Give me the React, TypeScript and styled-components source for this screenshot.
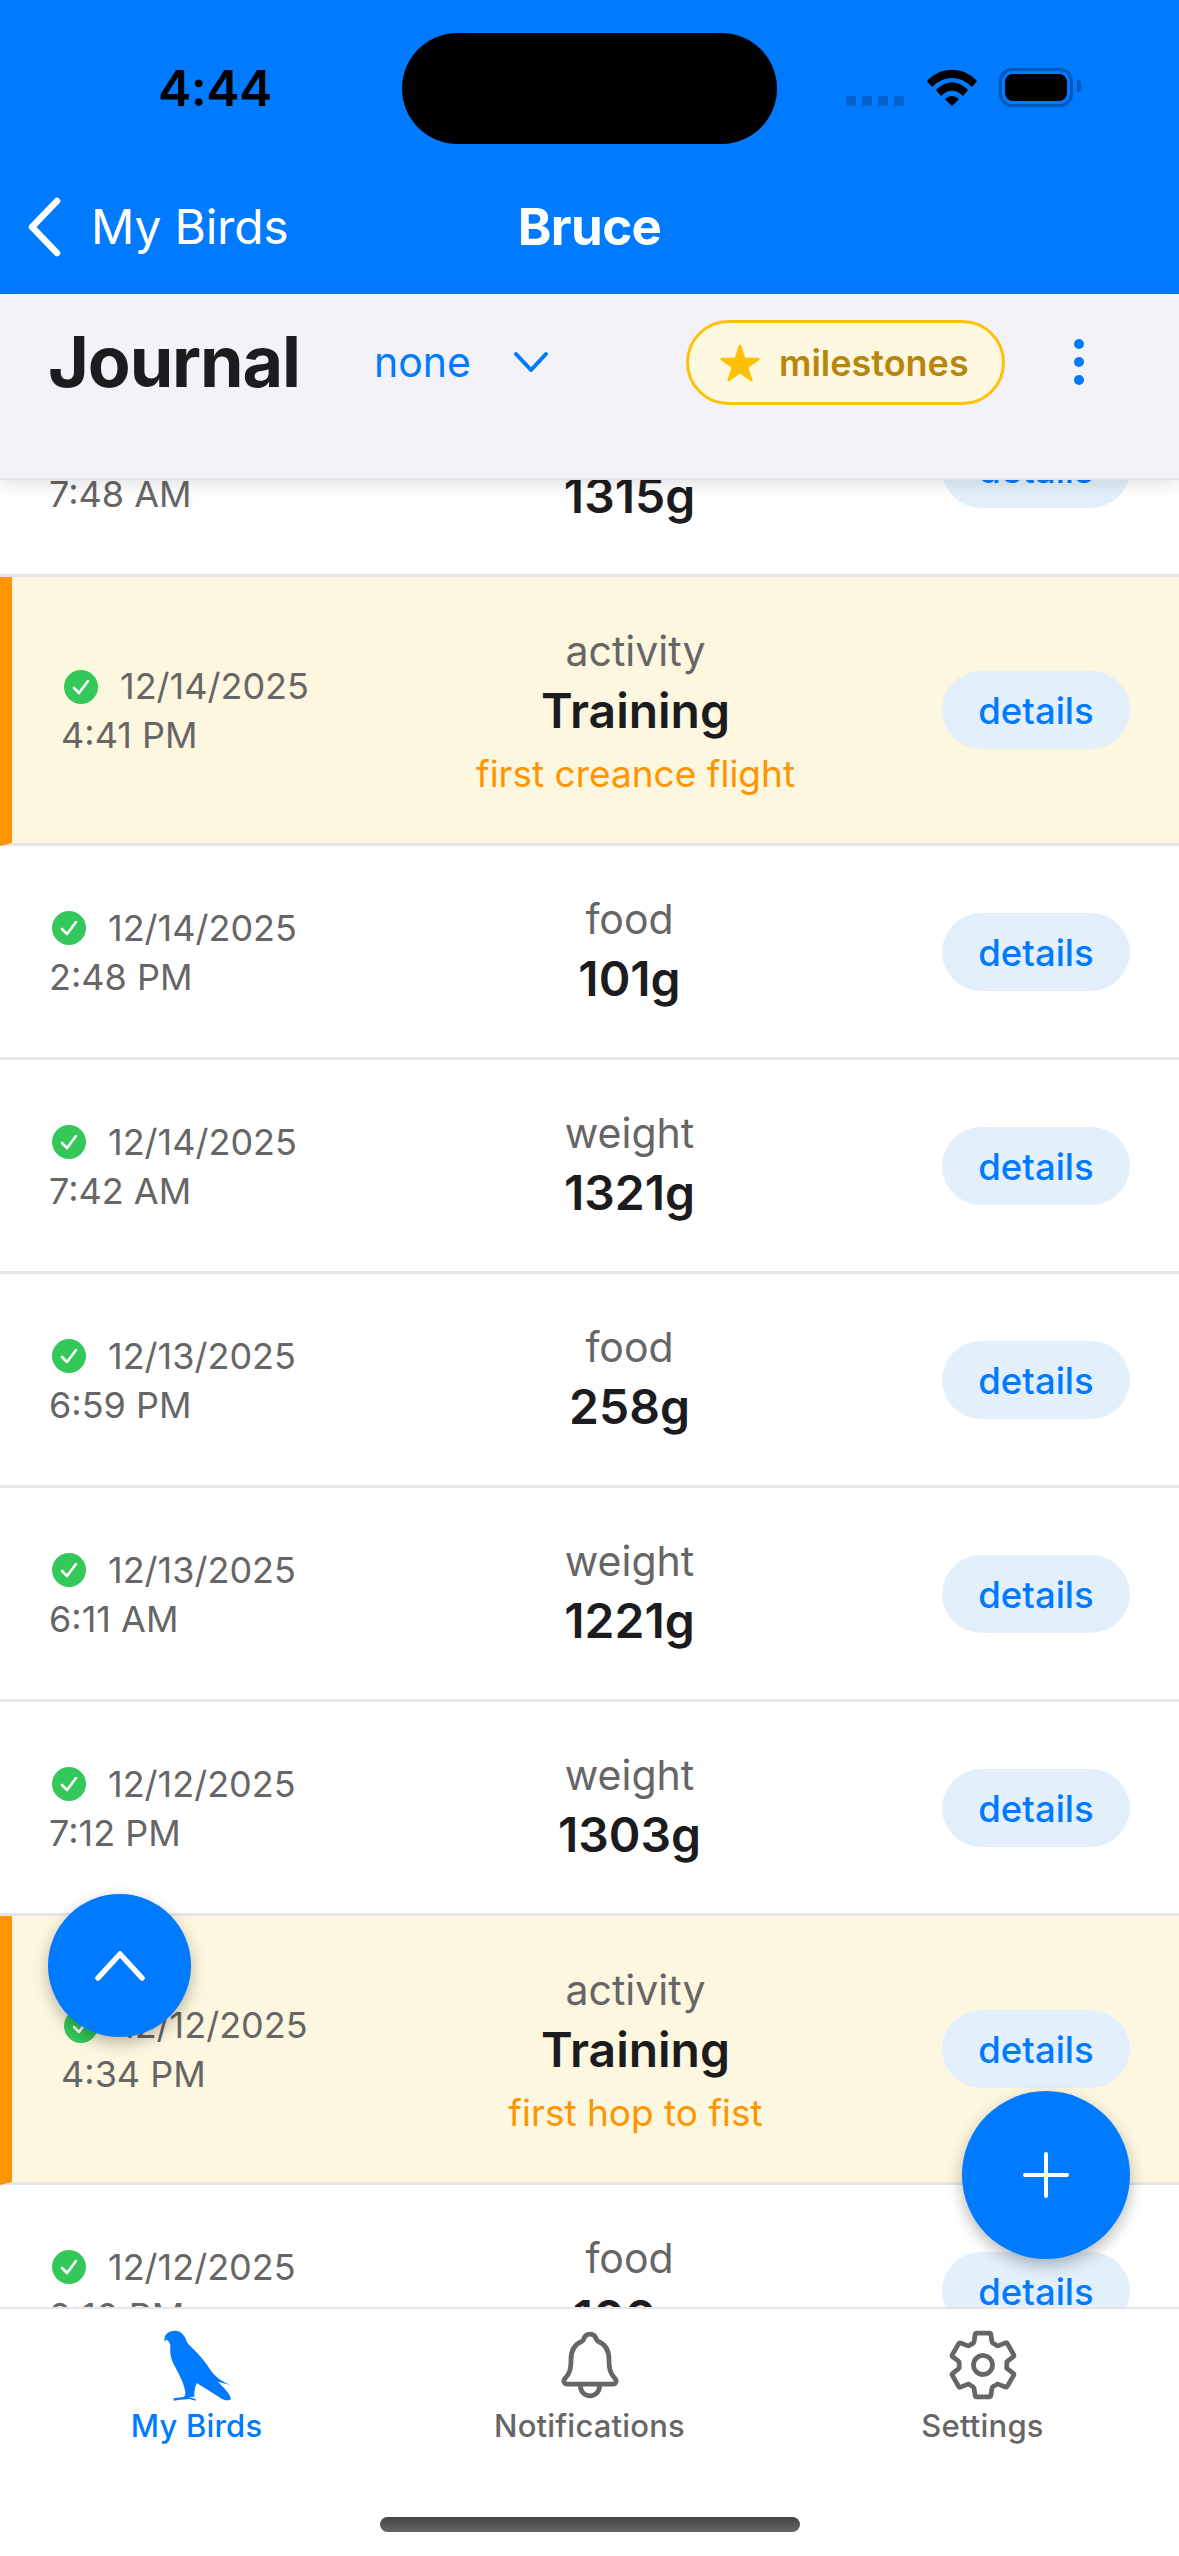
import styled, { createGlobalStyle } from 'styled-components';
import { IoNotificationsOutline, IoSettingsOutline, IoStar } from 'react-icons/io5';

const BLUE = '#007aff';
const FONT = 'Inter, "Noto Sans", "Liberation Sans", sans-serif';

type Entry = {
  date: string;
  time: string;
  kind: string;
  value: string;
  note?: string;
};

const entries: Entry[] = [
  { date: '12/15/2025', time: '7:48 AM', kind: 'weight', value: '1315g' },
  { date: '12/14/2025', time: '4:41 PM', kind: 'activity', value: 'Training', note: 'first creance flight' },
  { date: '12/14/2025', time: '2:48 PM', kind: 'food', value: '101g' },
  { date: '12/14/2025', time: '7:42 AM', kind: 'weight', value: '1321g' },
  { date: '12/13/2025', time: '6:59 PM', kind: 'food', value: '258g' },
  { date: '12/13/2025', time: '6:11 AM', kind: 'weight', value: '1221g' },
  { date: '12/12/2025', time: '7:12 PM', kind: 'weight', value: '1303g' },
  { date: '12/12/2025', time: '4:34 PM', kind: 'activity', value: 'Training', note: 'first hop to fist' },
  { date: '12/12/2025', time: '2:10 PM', kind: 'food', value: '100g' },
];

const GlobalStyle = createGlobalStyle`
  html, body {
    margin: 0;
    background: #fff;
    font-family: ${FONT};
  }
  * {
    box-sizing: border-box;
  }
`;

const Screen = styled.div`
  width: 1179px;
  height: 2556px;
  display: flex;
  flex-direction: column;
  overflow: hidden;
`;

const Header = styled.header`
  height: 294px;
  background: ${BLUE};
  flex: none;
`;

const StatusBar = styled.div`
  height: 177px;
  padding-top: 33px;
  display: grid;
  grid-template-columns: 402px 375px 1fr;
`;

const Clock = styled.div`
  padding: 29px 0 0 158px;
  font-size: 50px;
  line-height: 52px;
  font-weight: 600;
  letter-spacing: -0.5px;
  color: #000;
`;

const Island = styled.div`
  height: 111px;
  border-radius: 56px;
  background: #000;
`;

const StatusIcons = styled.div`
  display: flex;
  align-items: flex-start;
  padding-left: 69px;
`;

const SignalDots = styled.div`
  display: flex;
  gap: 6px;
  margin-top: 63px;
`;

const SignalDot = styled.span`
  width: 10px;
  height: 10px;
  border-radius: 3px;
  background: #0062cc;
`;

const WifiIcon = styled.svg`
  width: 50px;
  height: 37px;
  margin: 36px 0 0 23px;
`;

const Battery = styled.div`
  width: 74px;
  height: 39px;
  margin: 35px 0 0 22px;
  padding: 3px;
  border: 3px solid #0058b8;
  border-radius: 13px;
  position: relative;
`;

const BatteryFill = styled.div`
  height: 100%;
  border-radius: 8px;
  background: #000;
`;

const BatteryCap = styled.div`
  position: absolute;
  right: -11px;
  top: 9px;
  width: 4px;
  height: 12px;
  border-radius: 0 4px 4px 0;
  background: #0058b8;
`;

const NavBar = styled.nav`
  display: grid;
  grid-template-columns: 1fr auto 1fr;
  align-items: center;
  height: 100px;
  color: #fff;
`;

const BackLink = styled.div`
  display: flex;
  align-items: center;
  gap: 29px;
  padding-left: 26px;
  font-size: 48px;
  line-height: 60px;
  letter-spacing: -0.2px;
`;

const BackIcon = styled.svg`
  width: 36px;
  height: 60px;
`;

const NavTitle = styled.div`
  font-size: 51px;
  line-height: 60px;
  font-weight: 700;
  letter-spacing: -0.6px;
`;

const Toolbar = styled.div`
  flex: none;
  height: 186px;
  padding: 26px 46px 0 48px;
  background: #f2f2f7;
  border-bottom: 2px solid #e5e5ea;
  box-shadow: 0 4px 18px rgba(0, 0, 0, 0.12);
  display: flex;
  align-items: flex-start;
  position: relative;
  z-index: 2;
`;

const ToolbarTitle = styled.h1`
  margin: 0;
  width: 326px;
  font-size: 70px;
  line-height: 84px;
  font-weight: 700;
  letter-spacing: -1.1px;
  color: #1c1c1e;
`;

const FilterText = styled.div`
  width: 139px;
  font-size: 41px;
  line-height: 84px;
  color: ${BLUE};
`;

const FilterChevron = styled.svg`
  width: 36px;
  height: 84px;
`;

const MilestonePill = styled.div`
  width: 319px;
  height: 85px;
  margin-left: 137px;
  border: 3px solid #ffc107;
  border-radius: 43px;
  background: #fff8e1;
  display: flex;
  align-items: center;
  gap: 18px;
  padding-left: 30px;
  font-size: 36px;
  font-weight: 600;
  color: #b8860b;
`;

const MoreDots = styled.div`
  margin: 19px 0 0 69px;
  display: flex;
  flex-direction: column;
  gap: 8px;
`;

const MoreDot = styled.span`
  width: 10px;
  height: 10px;
  border-radius: 50%;
  background: ${BLUE};
`;

const Main = styled.main`
  flex: 1;
  min-height: 0;
  position: relative;
  overflow: hidden;
  background: #fff;
`;

const List = styled.div`
  margin-top: -117px;
`;

const Row = styled.div<{ $milestone: boolean }>`
  display: flex;
  align-items: center;
  height: ${(p) => (p.$milestone ? '269px' : '214px')};
  padding: 0 49px;
  border-bottom: 3px solid #e5e5ea;
  background: ${(p) => (p.$milestone ? '#fef7df' : '#fff')};
  ${(p) => p.$milestone && 'border-left: 12px solid #ff9500;'}
`;

const DateColumn = styled.div`
  flex: none;
  width: 268px;
  padding-top: 2px;
  color: #666;
  font-size: 36px;
  line-height: 49px;
`;

const DateLine = styled.div`
  display: flex;
  align-items: center;
  gap: 22px;
  padding-left: 3px;
`;

const CheckIcon = styled.svg`
  width: 34px;
  height: 34px;
  flex: none;
`;

const CenterColumn = styled.div<{ $milestone: boolean }>`
  flex: 1;
  min-width: 0;
  text-align: center;
  ${(p) => (p.$milestone ? 'padding-top: 5px;' : 'padding-bottom: 6px;')}
`;

const Kind = styled.div`
  font-size: 41px;
  line-height: 60px;
  color: #666;
`;

const Value = styled.div`
  font-size: 48px;
  line-height: 60px;
  font-weight: 600;
  color: #1c1c1e;
`;

const Note = styled.div`
  margin-top: 3px;
  font-size: 37px;
  line-height: 60px;
  color: #ff9500;
`;

const DetailsButton = styled.div`
  flex: none;
  width: 188px;
  height: 78px;
  border-radius: 39px;
  background: #e3f0fc;
  color: ${BLUE};
  font-size: 36.5px;
  font-weight: 500;
  line-height: 81px;
  text-align: center;
`;

const Fab = styled.div<{ $size: number; $side: 'left' | 'right'; $bottom: number }>`
  position: absolute;
  ${(p) => p.$side}: ${(p) => (p.$side === 'left' ? 48 : 49)}px;
  bottom: ${(p) => p.$bottom}px;
  width: ${(p) => p.$size}px;
  height: ${(p) => p.$size}px;
  border-radius: 50%;
  background: ${BLUE};
  box-shadow: 0 6px 16px rgba(0, 0, 0, 0.28);
  display: flex;
  align-items: center;
  justify-content: center;
`;

const TabBar = styled.div`
  flex: none;
  height: 249px;
  border-top: 2px solid #e5e5ea;
  background: #fff;
  display: grid;
  grid-template-columns: repeat(3, 1fr);
  position: relative;
`;

const Tab = styled.div<{ $active?: boolean }>`
  display: flex;
  flex-direction: column;
  align-items: center;
  padding-top: 17px;
  color: ${(p) => (p.$active ? BLUE : '#666')};
`;

const TabIconSlot = styled.div`
  height: 78px;
  display: flex;
  align-items: center;
  justify-content: center;
  font-size: 76px;
`;

const TabLabel = styled.div`
  font-size: 31px;
  line-height: 44px;
  font-weight: 500;
  letter-spacing: 0.2px;
`;

const HomeIndicator = styled.div`
  position: absolute;
  left: 380px;
  bottom: 24px;
  width: 420px;
  height: 15px;
  border-radius: 8px;
  background: linear-gradient(#444, #666);
`;

function BirdIcon() {
  return (
    <svg width="70" height="75" viewBox="180 80 210 225" fill={BLUE}>
      <path d="M188 121 C184 100 200 87 222 88 C240 90 250 105 256 125 C275 145 298 165 316 192 C330 214 346 236 385 251 L347 241 C365 258 382 274 387 292 C382 300 366 299 350 286 L284 245 C279 258 276 272 277 286 L260 288 L281 293 L281 298 L262 293 L228 296 L216 298 L214 291 L245 287 C250 283 250 278 250 272 C245 245 235 225 216 190 C205 172 204 150 205 132 C203 122 198 117 194 115 C191 116 190 118 188 121 Z" />
    </svg>
  );
}

function Check() {
  return (
    <CheckIcon viewBox="0 0 34 34">
      <circle cx="17" cy="17" r="17" fill="#34c759" />
      <path d="M10 18 L15 23 L24 11" fill="none" stroke="#fff" strokeWidth="2.6" strokeLinecap="round" strokeLinejoin="round" />
    </CheckIcon>
  );
}

export default function App() {
  return (
    <Screen>
      <GlobalStyle />
      <Header>
        <StatusBar>
          <Clock>4:44</Clock>
          <Island />
          <StatusIcons>
            <SignalDots>
              <SignalDot />
              <SignalDot />
              <SignalDot />
              <SignalDot />
            </SignalDots>
            <WifiIcon viewBox="0 0 50 37">
              <path d="M0 12 C14 -3 36 -3 50 12 L45 18 C33 6 17 6 5 18 Z M9 21 C18 11 32 11 41 21 L36 27 C29 20 21 20 14 27 Z M18 30 C22 26 28 26 32 30 L25 37 Z" fill="#000" />
            </WifiIcon>
            <Battery>
              <BatteryFill />
              <BatteryCap />
            </Battery>
          </StatusIcons>
        </StatusBar>
        <NavBar>
          <BackLink>
            <BackIcon viewBox="0 0 36 60">
              <path d="M31 4 L6 30 L31 56" fill="none" stroke="#fff" strokeWidth="6.5" strokeLinecap="round" strokeLinejoin="round" />
            </BackIcon>
            My Birds
          </BackLink>
          <NavTitle>Bruce</NavTitle>
          <div />
        </NavBar>
      </Header>
      <Toolbar>
        <ToolbarTitle>Journal</ToolbarTitle>
        <FilterText>none</FilterText>
        <FilterChevron viewBox="0 0 36 84">
          <path d="M3 34 L18 50 L33 34" fill="none" stroke={BLUE} strokeWidth="4" strokeLinecap="round" strokeLinejoin="round" />
        </FilterChevron>
        <MilestonePill>
          <IoStar size={42} color="#ffc107" />
          milestones
        </MilestonePill>
        <MoreDots>
          <MoreDot />
          <MoreDot />
          <MoreDot />
        </MoreDots>
      </Toolbar>
      <Main>
        <List>
          {entries.map((e, i) => (
            <Row key={i} $milestone={!!e.note}>
              <DateColumn>
                <DateLine>
                  <Check />
                  {e.date}
                </DateLine>
                {e.time}
              </DateColumn>
              <CenterColumn $milestone={!!e.note}>
                <Kind>{e.kind}</Kind>
                <Value>{e.value}</Value>
                {e.note && <Note>{e.note}</Note>}
              </CenterColumn>
              <DetailsButton>details</DetailsButton>
            </Row>
          ))}
        </List>
        <Fab $size={143} $side="left" $bottom={270}>
          <svg width="50" height="30" viewBox="0 0 50 30">
            <path d="M3 27 L25 3 L47 27" fill="none" stroke="#fff" strokeWidth="5.5" strokeLinecap="round" strokeLinejoin="round" />
          </svg>
        </Fab>
        <Fab $size={168} $side="right" $bottom={48}>
          <svg width="46" height="46" viewBox="0 0 46 46">
            <path d="M23 2 V44 M2 23 H44" fill="none" stroke="#fff" strokeWidth="4" strokeLinecap="round" />
          </svg>
        </Fab>
      </Main>
      <TabBar>
        <Tab $active>
          <TabIconSlot>
            <BirdIcon />
          </TabIconSlot>
          <TabLabel>My Birds</TabLabel>
        </Tab>
        <Tab>
          <TabIconSlot>
            <IoNotificationsOutline />
          </TabIconSlot>
          <TabLabel>Notifications</TabLabel>
        </Tab>
        <Tab>
          <TabIconSlot>
            <IoSettingsOutline />
          </TabIconSlot>
          <TabLabel>Settings</TabLabel>
        </Tab>
        <HomeIndicator />
      </TabBar>
    </Screen>
  );
}
